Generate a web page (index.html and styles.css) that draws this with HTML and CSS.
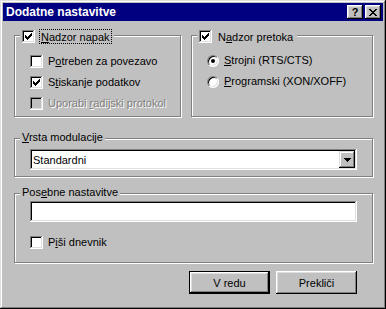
FILE: index.html
```html
<!DOCTYPE html>
<html lang="sl">
<head>
  <meta charset="UTF-8">
  <meta name="viewport" content="width=device-width, initial-scale=1.0">
  <title>Dodatne nastavitve</title>
  <link rel="stylesheet" href="styles.css">
</head>
<body>
  <div class="window">
    <div class="titlebar">
      <span class="title">Dodatne nastavitve</span>
      <div class="title-buttons">
        <span class="tbtn">?</span>
        <span class="tbtn">
          <svg width="8" height="7" viewBox="0 0 8 7"><path d="M0 0h2v1H0zM6 0h2v1H6zM1 1h2v1H1zM5 1h2v1H5zM2 2h4v1H2zM3 3h2v1H3zM2 4h4v1H2zM1 5h2v1H1zM5 5h2v1H5zM0 6h2v1H0zM6 6h2v1H6z"/></svg>
        </span>
      </div>
    </div>

    <div class="content">
      <div class="top-row">
        <fieldset class="group group-errors">
          <legend class="legend-check">
            <span class="check"><svg width="7" height="7" viewBox="0 0 7 7"><path d="M6 0h1v1H6zM5 1h2v1H5zM0 2h1v1H0zM4 2h3v1H4zM0 3h2v1H0zM3 3h3v1H3zM0 4h5v1H0zM1 5h3v1H1zM2 6h1v1H2z"/></svg></span><span class="legend-label focus"><u>N</u>adzor napak</span>
          </legend>
          <div class="group-body">
            <div class="row"><span class="check"></span><span>P<u>o</u>treben za povezavo</span></div>
            <div class="row"><span class="check"><svg width="7" height="7" viewBox="0 0 7 7"><path d="M6 0h1v1H6zM5 1h2v1H5zM0 2h1v1H0zM4 2h3v1H4zM0 3h2v1H0zM3 3h3v1H3zM0 4h5v1H0zM1 5h3v1H1zM2 6h1v1H2z"/></svg></span><span>S<u>t</u>iskanje podatkov</span></div>
            <div class="row disabled"><span class="check"></span><span>Uporabi <u>r</u>adijski protokol</span></div>
          </div>
        </fieldset>

        <fieldset class="group group-flow">
          <legend class="legend-check">
            <span class="check"><svg width="7" height="7" viewBox="0 0 7 7"><path d="M6 0h1v1H6zM5 1h2v1H5zM0 2h1v1H0zM4 2h3v1H4zM0 3h2v1H0zM3 3h3v1H3zM0 4h5v1H0zM1 5h3v1H1zM2 6h1v1H2z"/></svg></span><span class="legend-label">N<u>a</u>dzor pretoka</span>
          </legend>
          <div class="group-body">
            <div class="row"><span class="radio on"></span><span><u>S</u>trojni (RTS/CTS)</span></div>
            <div class="row"><span class="radio"></span><span><u>P</u>rogramski (XON/XOFF)</span></div>
          </div>
        </fieldset>
      </div>

      <fieldset class="group group-modulation">
        <legend class="legend-plain"><u>V</u>rsta modulacije</legend>
        <div class="group-body">
          <div class="select">
            <span class="select-value">Standardni</span>
            <span class="select-arrow">
              <svg width="7" height="4" viewBox="0 0 7 4"><path d="M0 0h7v1H0zM1 1h5v1H1zM2 2h3v1H2zM3 3h1v1H3z"/></svg>
            </span>
          </div>
        </div>
      </fieldset>

      <fieldset class="group group-special">
        <legend class="legend-plain">Pos<u>e</u>bne nastavitve</legend>
        <div class="group-body">
          <div class="textbox"></div>
          <div class="row"><span class="check"></span><span>P<u>i</u>ši dnevnik</span></div>
        </div>
      </fieldset>

      <div class="buttons">
        <button class="btn default">V redu</button>
        <button class="btn">Prekliči</button>
      </div>
    </div>
  </div>
</body>
</html>
```

FILE: styles.css
```css
/* Base */
html,
body {
  margin: 0;
  padding: 0;
}

body {
  font-family: "Liberation Sans", Arial, sans-serif;
  font-size: 11px;
  color: #000;
  background: #c0c0c0;
}

/* Window frame */
.window {
  width: 386px;
  height: 309px;
  box-sizing: border-box;
  padding: 3px;
  background: #c0c0c0;
  box-shadow: inset -1px -1px #000, inset 1px 1px #dfdfdf,
              inset -2px -2px #808080, inset 2px 2px #fff;
}

.titlebar {
  height: 18px;
  display: flex;
  align-items: center;
  justify-content: space-between;
  padding: 0 2px 0 3px;
  background: #000080;
}

.title {
  color: #fff;
  font-weight: bold;
  font-size: 12px;
}

.title-buttons {
  display: flex;
  gap: 2px;
}

.tbtn {
  width: 16px;
  height: 14px;
  display: flex;
  align-items: center;
  justify-content: center;
  background: #c0c0c0;
  font-weight: bold;
  font-size: 11px;
  line-height: 14px;
  box-shadow: inset -1px -1px #000, inset 1px 1px #fff,
              inset -2px -2px #808080, inset 2px 2px #dfdfdf;
}

/* Content */
.content {
  padding: 5px 10px 0 11px;
}

.top-row {
  display: flex;
  gap: 10px;
}

.group {
  margin: 0;
  padding: 0;
  min-width: 0;
  border: 1px solid #808080;
  box-shadow: 1px 1px 0 #fff, inset 1px 1px 0 #fff;
}

.group-errors {
  width: 167px;
  box-sizing: border-box;
}

.group-flow {
  flex: 1;
}

.group-modulation {
  margin-top: 15px;
}

.group-special {
  margin-top: 10px;
}

legend {
  margin-left: 5px;
  background: #c0c0c0;
}

.legend-check {
  padding: 4px 2px 0;
  line-height: 15px;
}

.legend-check .check {
  vertical-align: top;
}

.legend-label {
  margin-left: 4px;
  padding: 2px 2px 1px;
}

.focus {
  outline: 1px dotted #000;
  outline-offset: -1px;
}

.legend-plain {
  padding: 0 2px 2px;
  line-height: 11px;
}

.group-body {
  display: flex;
  flex-direction: column;
  padding: 0 15px;
}

.group-errors .group-body {
  padding-top: 10px;
  padding-bottom: 6px;
  gap: 8px;
}

.group-flow .group-body {
  padding-top: 9px;
  gap: 8px;
}

.group-modulation .group-body {
  padding-top: 4px;
  padding-bottom: 6px;
}

.group-special .group-body {
  padding-top: 1px;
  padding-bottom: 13px;
  gap: 14px;
}

/* Controls */
.row {
  display: flex;
  align-items: center;
  gap: 5px;
  height: 13px;
  line-height: 13px;
  white-space: nowrap;
}

.row.disabled {
  color: #808080;
  text-shadow: 1px 1px 0 #fff;
}

.row.disabled .check {
  background: #c0c0c0;
}

.check {
  width: 13px;
  height: 13px;
  box-sizing: border-box;
  display: inline-flex;
  align-items: center;
  justify-content: center;
  flex: none;
  background: #fff;
  box-shadow: inset -1px -1px #fff, inset 1px 1px #808080,
              inset -2px -2px #dfdfdf, inset 2px 2px #000;
}

.radio {
  width: 12px;
  height: 12px;
  box-sizing: border-box;
  display: flex;
  align-items: center;
  justify-content: center;
  flex: none;
  border: 1px solid;
  border-color: #808080 #fff #fff #808080;
  border-radius: 50%;
  background: #fff;
  box-shadow: inset 1px 1px #000, inset -1px -1px #dfdfdf;
}

.radio.on::after {
  content: "";
  width: 4px;
  height: 4px;
  border-radius: 50%;
  background: #000;
}

.select,
.textbox {
  height: 21px;
  box-sizing: border-box;
  background: #fff;
  box-shadow: inset -1px -1px #fff, inset 1px 1px #808080,
              inset -2px -2px #dfdfdf, inset 2px 2px #000;
}

.select {
  display: flex;
  align-items: center;
  padding: 2px;
}

.select-value {
  flex: 1;
  padding-left: 1px;
}

.select-arrow {
  width: 16px;
  height: 17px;
  display: flex;
  align-items: center;
  justify-content: center;
  background: #c0c0c0;
  box-shadow: inset -1px -1px #000, inset 1px 1px #dfdfdf,
              inset -2px -2px #808080, inset 2px 2px #fff;
}

/* Dialog buttons */
.buttons {
  display: flex;
  justify-content: flex-end;
  gap: 6px;
  margin-top: 8px;
  padding-right: 16px;
}

.btn {
  width: 81px;
  height: 23px;
  box-sizing: border-box;
  padding: 0;
  border: none;
  font-family: inherit;
  font-size: 11px;
  color: #000;
  background: #c0c0c0;
  box-shadow: inset -1px -1px #000, inset 1px 1px #fff,
              inset -2px -2px #808080, inset 2px 2px #dfdfdf;
}

.btn.default {
  border: 1px solid #000;
}
```
